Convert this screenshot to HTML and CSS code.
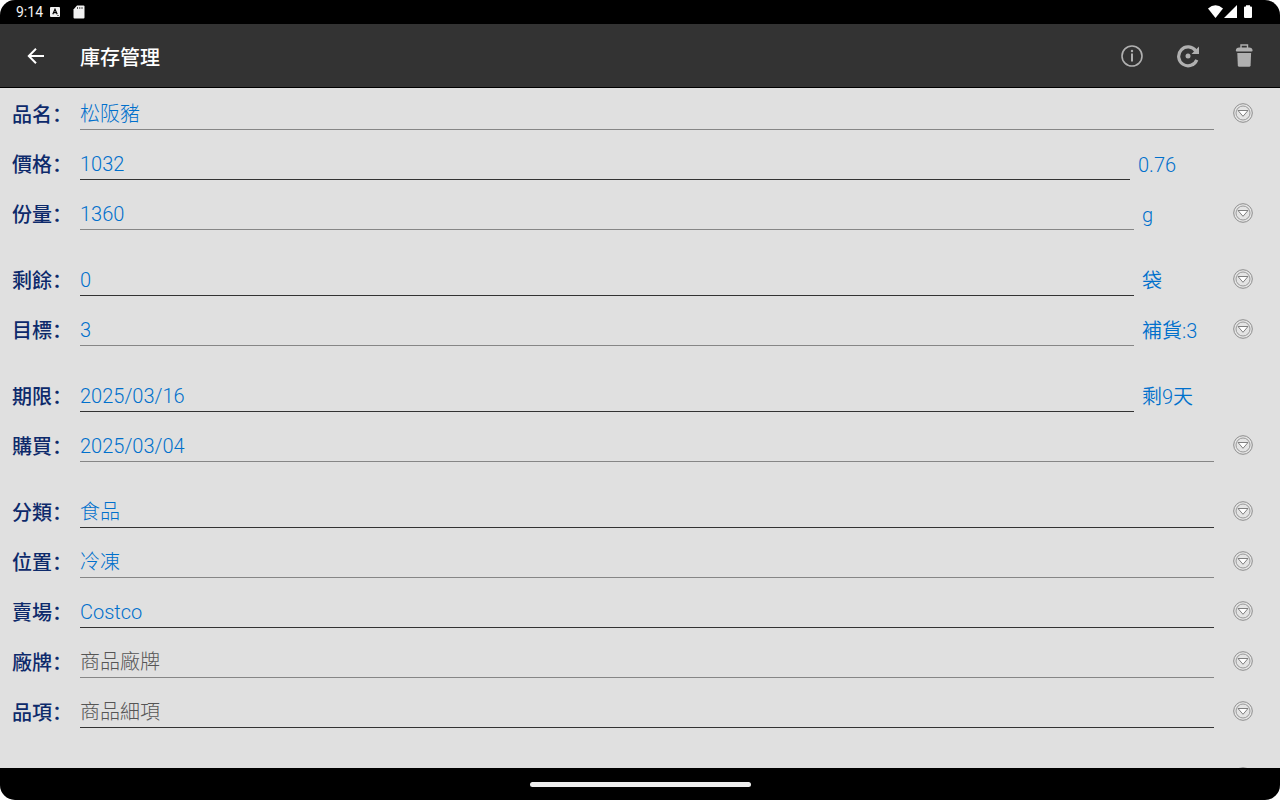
FILE: index.html
```html
<!DOCTYPE html>
<html lang="zh-Hans">
<head>
  <meta charset="UTF-8" />
  <meta name="viewport" content="width=device-width, initial-scale=1.0"/>
  <title>庫存管理</title>
  <link rel="stylesheet" href="styles.css">
</head>
<body>
  <!-- shared drop-down icon -->
  <svg class="defs" aria-hidden="true">
    <symbol id="drop" viewBox="0 0 20 20">
      <circle cx="10" cy="10" r="9.3" fill="#e6e6e6" stroke="#8c8c8c" stroke-width="1"/>
      <circle cx="10" cy="10" r="7" fill="#e4e4e4" stroke="#999" stroke-width="1"/>
      <path d="M5 7.5h10L10 13.3z" fill="#fff" stroke="#808080" stroke-width="1" stroke-linejoin="round"/>
    </symbol>
  </svg>

  <div class="device">
    <div class="status">
      <span class="clock">9:14</span>
      <svg class="keyboard-icon" width="10" height="10" viewBox="0 0 10 10">
        <rect width="10" height="10" rx="1" fill="#f2f2f2"/>
        <path d="M2.8 7.2L5 2.2l2.2 5M3.6 5.6h2.8" fill="none" stroke="#000" stroke-width="1.2"/>
        <path d="M7 8.5h2" stroke="#777" stroke-width="1"/>
      </svg>
      <svg class="sd-icon" width="12" height="14" viewBox="0 0 12 14">
        <path d="M4 .5h6.5q1 0 1 1v11q0 1-1 1h-9q-1 0-1-1V4.5z" fill="#f2f2f2"/>
        <path d="M4.5 2v2M6.8 2v2M9 2v2" stroke="#555" stroke-width="1"/>
      </svg>
      <svg class="signal" width="46" height="14" viewBox="0 0 46 14">
        <path d="M0 3.6Q7.5-3.2 15 3.6L7.5 13z" fill="#fff"/>
        <path d="M29 0v13H16z" fill="#fff"/>
        <path d="M38 .2h4v1.3h1q1 0 1 1v9.5q0 1-1 1h-6q-1 0-1-1V2.5q0-1 1-1h1z" fill="#fff"/>
      </svg>
    </div>

    <header class="toolbar">
      <button class="back" aria-label="返回">
        <svg width="18" height="18" viewBox="0 0 18 18">
          <path d="M17 9H2.5M9 1.8L1.8 9 9 16.2" fill="none" stroke="#fff" stroke-width="2"/>
        </svg>
      </button>
      <h1>庫存管理</h1>
      <button class="action" aria-label="資訊">
        <svg width="24" height="24" viewBox="0 0 24 24">
          <circle cx="12" cy="12" r="10" fill="none" stroke="#b0b0b0" stroke-width="1.6"/>
          <path d="M12 9.5v8" stroke="#b0b0b0" stroke-width="2"/>
          <circle cx="12" cy="7" r="1.2" fill="#b0b0b0"/>
        </svg>
      </button>
      <button class="action" aria-label="重設">
        <svg width="24" height="24" viewBox="0 0 24 24">
          <path d="M20.8 15.8A9.4 9.4 0 1 1 19.8 7" fill="none" stroke="#b0b0b0" stroke-width="3.2"/>
          <path d="M23 2.5V10h-7.5z" fill="#b0b0b0"/>
          <circle cx="12" cy="12" r="2.5" fill="#b0b0b0"/>
        </svg>
      </button>
      <button class="action" aria-label="刪除">
        <svg width="24" height="24" viewBox="0 0 24 24">
          <path d="M9 4V1h6.500v3" fill="none" stroke="#b0b0b0" stroke-width="1.4"/>
          <path d="M3.8 6.5q.2-3 3.5-3h9.800q3.300 0 3.500 3 0 1-1 1H4.800q-1 0-1-1z" fill="#b0b0b0"/>
          <path d="M5.3 9h13.800l-.5 12.300q-.1 1.500-1.600 1.500H7.400q-1.500 0-1.600-1.500z" fill="#b0b0b0"/>
        </svg>
      </button>
    </header>

    <form class="form">
      <div class="group">
        <div class="row">
          <label for="name">品名：</label>
          <input id="name" type="text" value="松阪豬">
          <button type="button" class="drop" aria-label="選擇品名"><svg><use href="#drop"/></svg></button>
        </div>
        <div class="row">
          <label for="price">價格：</label>
          <input id="price" type="text" value="1032">
          <output class="unit rate">0.76</output>
        </div>
        <div class="row">
          <label for="amount">份量：</label>
          <input id="amount" type="text" value="1360">
          <span class="unit">g</span>
          <button type="button" class="drop" aria-label="選擇單位"><svg><use href="#drop"/></svg></button>
        </div>
      </div>

      <div class="group">
        <div class="row">
          <label for="left">剩餘：</label>
          <input id="left" type="text" value="0">
          <span class="unit">袋</span>
          <button type="button" class="drop" aria-label="選擇包裝"><svg><use href="#drop"/></svg></button>
        </div>
        <div class="row">
          <label for="target">目標：</label>
          <input id="target" type="text" value="3">
          <span class="unit">補貨:3</span>
          <button type="button" class="drop" aria-label="選擇目標"><svg><use href="#drop"/></svg></button>
        </div>
      </div>

      <div class="group">
        <div class="row">
          <label for="expiry">期限：</label>
          <input id="expiry" type="text" value="2025/03/16">
          <span class="unit wide">剩9天</span>
        </div>
        <div class="row">
          <label for="bought">購買：</label>
          <input id="bought" type="text" value="2025/03/04">
          <button type="button" class="drop" aria-label="選擇日期"><svg><use href="#drop"/></svg></button>
        </div>
      </div>

      <div class="group">
        <div class="row">
          <label for="category">分類：</label>
          <input id="category" type="text" value="食品">
          <button type="button" class="drop" aria-label="選擇分類"><svg><use href="#drop"/></svg></button>
        </div>
        <div class="row">
          <label for="place">位置：</label>
          <input id="place" type="text" value="冷凍">
          <button type="button" class="drop" aria-label="選擇位置"><svg><use href="#drop"/></svg></button>
        </div>
        <div class="row">
          <label for="store">賣場：</label>
          <input id="store" type="text" value="Costco">
          <button type="button" class="drop" aria-label="選擇賣場"><svg><use href="#drop"/></svg></button>
        </div>
        <div class="row">
          <label for="brand">廠牌：</label>
          <input id="brand" type="text" placeholder="商品廠牌">
          <button type="button" class="drop" aria-label="選擇廠牌"><svg><use href="#drop"/></svg></button>
        </div>
        <div class="row">
          <label for="item">品項：</label>
          <input id="item" type="text" placeholder="商品細項">
          <button type="button" class="drop" aria-label="選擇品項"><svg><use href="#drop"/></svg></button>
        </div>
      </div>

      <div class="group">
        <div class="row more">
          <button type="button" class="drop" aria-label="更多"><svg><use href="#drop"/></svg></button>
        </div>
      </div>
    </form>

    <div class="navbar"><div class="handle"></div></div>
  </div>
</body>
</html>
```

FILE: styles.css
```css
* {
  box-sizing: border-box;
}

body {
  margin: 0;
  background: #fff;
  font-family: Roboto, "Noto Sans CJK SC", sans-serif;
  font-size: 20px;
}

button {
  padding: 0;
  border: none;
  background: none;
  cursor: pointer;
}

.defs {
  display: none;
}

.device {
  display: flex;
  flex-direction: column;
  height: 100vh;
  background: #e0e0e0;
  border-radius: 15px;
  overflow: hidden;
}

/* status bar */
.status {
  display: flex;
  align-items: center;
  flex: none;
  height: 24px;
  padding: 0 26px 0 16px;
  background: #000;
  color: #f2f2f2;
  font-size: 14px;
}

.keyboard-icon {
  margin-left: 7px;
}

.sd-icon {
  margin-left: 13px;
}

.signal {
  margin-left: auto;
}

/* toolbar */
.toolbar {
  display: flex;
  align-items: center;
  flex: none;
  height: 64px;
  padding: 0 8px;
  background: #333;
  border-bottom: 1px solid #000;
}

.toolbar h1 {
  flex: 1;
  margin: 0 0 0 16px;
  padding-top: 2px;
  color: #fff;
  font-size: 20px;
  font-weight: 500;
}

.toolbar svg {
  display: block;
  margin: auto;
}

.back,
.action {
  width: 56px;
  height: 56px;
}

/* form */
.form {
  flex: 1;
  min-height: 0;
  overflow: hidden;
}

.group {
  display: flex;
  flex-direction: column;
  gap: 8px;
  margin-bottom: 24px;
}

.row {
  display: flex;
  height: 42px;
  line-height: 30px;
}

.row label {
  flex: none;
  width: 80px;
  padding: 12px 0 0 12px;
  color: #0d2a6b;
  font-weight: 500;
  white-space: nowrap;
}

.row input {
  flex: 1;
  min-width: 0;
  padding: 10px 0 0;
  border: none;
  border-bottom: 1px solid #333;
  outline: none;
  background: none;
  color: #0070cc;
  font: inherit;
  font-weight: 300;
}

.row input::placeholder {
  color: #555;
  opacity: 1;
}

.group:first-child .row:nth-child(odd) input,
.group:not(:first-child) .row:nth-child(even) input {
  border-color: #868686;
}

.unit {
  flex: none;
  width: 80px;
  padding: 12px 0 0 8px;
  color: #0070cc;
  font-weight: 350;
}

.unit.wide {
  width: 146px;
}

.unit.rate {
  width: 150px;
}

.drop {
  flex: none;
  width: 58px;
  height: 34px;
  margin: 8px 8px 0 0;
}

.drop svg {
  display: block;
  width: 20px;
  height: 20px;
  margin: auto;
}

.more {
  justify-content: flex-end;
}

/* gesture bar */
.navbar {
  display: flex;
  align-items: center;
  justify-content: center;
  flex: none;
  height: 32px;
  background: #000;
}

.handle {
  width: 221px;
  height: 5px;
  border-radius: 3px;
  background: #eee;
}
```
